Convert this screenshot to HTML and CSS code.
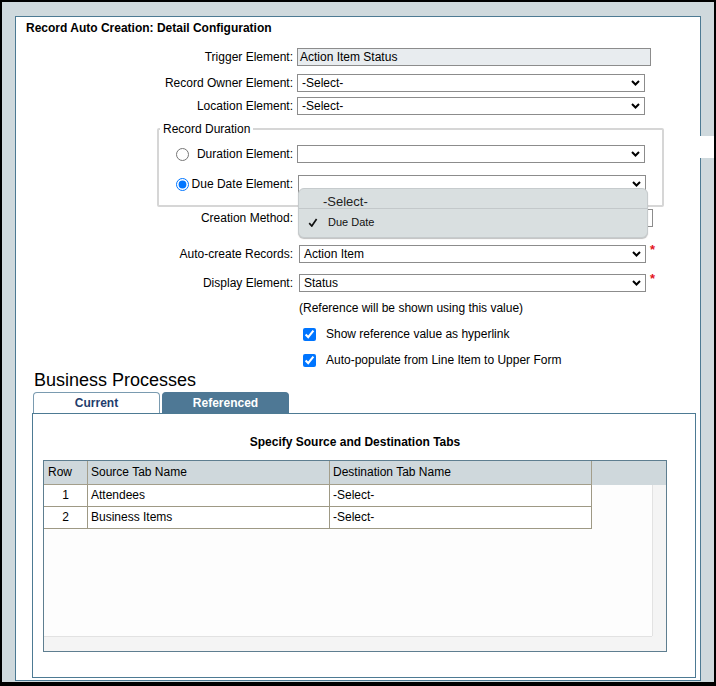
FILE: index.html
```html
<!DOCTYPE html>
<html>
<head>
<meta charset="utf-8">
<link rel="stylesheet" href="styles.css">
</head>
<body>
<div class="frame">
  <div class="panel">
    <div class="title">Record Auto Creation: Detail Configuration</div>

    <div class="row r-trigger">
      <span class="lbl">Trigger Element:</span>
      <div class="field readonly">Action Item Status</div>
    </div>
    <div class="row r-owner">
      <span class="lbl">Record Owner Element:</span>
      <div class="field select"><span>-Select-</span><svg class="chev" width="9" height="6" viewBox="0 0 9 6"><path d="M1 1l3.5 3.5L8 1" stroke="#000" stroke-width="2" fill="none"/></svg></div>
    </div>
    <div class="row r-location">
      <span class="lbl">Location Element:</span>
      <div class="field select"><span>-Select-</span><svg class="chev" width="9" height="6" viewBox="0 0 9 6"><path d="M1 1l3.5 3.5L8 1" stroke="#000" stroke-width="2" fill="none"/></svg></div>
    </div>

    <fieldset class="duration">
      <legend>Record Duration</legend>
      <div class="frow frow1">
        <input type="radio" name="dur" class="radio">
        <span class="flbl">Duration Element:</span>
        <div class="field select"><span></span><svg class="chev" width="9" height="6" viewBox="0 0 9 6"><path d="M1 1l3.5 3.5L8 1" stroke="#000" stroke-width="2" fill="none"/></svg></div>
      </div>
      <div class="frow frow2">
        <input type="radio" name="dur" class="radio" checked>
        <span class="flbl">Due Date Element:</span>
        <div class="field select shift1"><span></span><svg class="chev" width="9" height="6" viewBox="0 0 9 6"><path d="M1 1l3.5 3.5L8 1" stroke="#000" stroke-width="2" fill="none"/></svg></div>
      </div>
    </fieldset>

    <div class="row r-method">
      <span class="lbl">Creation Method:</span>
      <div class="field select wide"><span></span><svg class="chev" width="9" height="6" viewBox="0 0 9 6"><path d="M1 1l3.5 3.5L8 1" stroke="#000" stroke-width="2" fill="none"/></svg></div>
    </div>
    <div class="row r-auto">
      <span class="lbl">Auto-create Records:</span>
      <div class="field select shift2"><span>Action Item</span><svg class="chev" width="9" height="6" viewBox="0 0 9 6"><path d="M1 1l3.5 3.5L8 1" stroke="#000" stroke-width="2" fill="none"/></svg></div>
      <span class="req">*</span>
    </div>
    <div class="row r-display">
      <span class="lbl">Display Element:</span>
      <div class="field select shift2"><span>Status</span><svg class="chev" width="9" height="6" viewBox="0 0 9 6"><path d="M1 1l3.5 3.5L8 1" stroke="#000" stroke-width="2" fill="none"/></svg></div>
      <span class="req">*</span>
    </div>
    <div class="note">(Reference will be shown using this value)</div>
    <label class="crow crow1"><input type="checkbox" class="cb" checked><span>Show reference value as hyperlink</span></label>
    <label class="crow crow2"><input type="checkbox" class="cb" checked><span>Auto-populate from Line Item to Upper Form</span></label>

    <h2 class="bp-title">Business Processes</h2>
    <div class="tabs">
      <div class="tab current">Current</div>
      <div class="tab ref">Referenced</div>
    </div>
    <div class="tab-body">
      <div class="specify">Specify Source and Destination Tabs</div>
      <div class="gridbox">
        <div class="ghead">
          <div class="cell c-row">Row</div>
          <div class="cell c-src">Source Tab Name</div>
          <div class="cell c-dst">Destination Tab Name</div>
        </div>
        <div class="gbody">
          <div class="grow">
            <div class="cell c-row num">1</div>
            <div class="cell c-src">Attendees</div>
            <div class="cell c-dst">-Select-</div>
          </div>
          <div class="grow">
            <div class="cell c-row num">2</div>
            <div class="cell c-src">Business Items</div>
            <div class="cell c-dst">-Select-</div>
          </div>
        </div>
        <div class="vscroll"></div>
        <div class="hscroll"></div>
        <div class="corner"></div>
      </div>
    </div>

    <div class="popup">
      <div class="pitem pitem1">-Select-</div>
      <div class="pitem pitem2"><svg class="tick" width="10" height="9" viewBox="0 0 10 9"><path d="M1.2 5.2l2.6 2.8L8.6 1" stroke="#111" stroke-width="1.7" fill="none"/></svg><span>Due Date</span></div>
    </div>
  </div>
  <div class="notch"></div>
</div>
</body>
</html>
```

FILE: styles.css
```css
* { box-sizing: border-box; }

body {
  margin: 0;
  font-family: "Liberation Sans", Arial, sans-serif;
  font-size: 12px;
  color: #000;
}

.frame {
  position: relative;
  width: 716px;
  height: 686px;
  background: #cfd9dd;
  border: 2px solid #000;
  border-bottom-width: 4px;
  padding: 14px 0 0 13px;
}

.panel {
  position: relative;
  width: 686px;
  height: 665px;
  background: #fff;
  border: 1px solid #4d7a93;
}

.notch {
  position: absolute;
  left: 698px;
  top: 134px;
  width: 14px;
  height: 22px;
  background: #fff;
}

.title {
  font-weight: bold;
  line-height: 14px;
  padding: 4px 0 0 10px;
}

.row {
  display: flex;
  align-items: center;
  height: 18px;
}

.lbl {
  width: 281px;
  padding-right: 4px;
  text-align: right;
  white-space: nowrap;
}

.field {
  height: 18px;
  border: 1px solid #8c8c8c;
  line-height: 16px;
  white-space: nowrap;
}

.readonly {
  width: 354px;
  padding-left: 2px;
  background: #e8ecef;
}

.select {
  width: 348px;
  display: flex;
  align-items: center;
  justify-content: space-between;
  padding: 0 4px 0 4px;
  background: #fff;
}

.select.shift1 { margin-left: 1px; }
.select.shift2 { margin-left: 2px; width: 347px; }
.select.wide { margin-left: 1px; width: 355px; }

.chev { display: block; flex: none; }

.r-trigger { margin-top: 13px; }
.r-owner { margin-top: 8px; }
.r-location { margin-top: 5px; }

.duration {
  margin: 7px 0 0 141px;
  width: 507px;
  padding: 0 0 12px 0;
  border: 2px solid #d6d6d6;
  border-radius: 2px;
}

.duration legend {
  margin-left: 1px;
  padding: 0 3px;
  line-height: 14px;
  font-size: 12px;
}

.frow {
  display: flex;
  align-items: center;
  height: 18px;
}

.frow1 { margin-top: 9px; }
.frow2 { margin-top: 12px; }

.radio {
  width: 13px;
  height: 13px;
  margin: 0 0 0 17px;
  flex: none;
}

.flbl {
  width: 108px;
  padding-right: 4px;
  text-align: right;
  white-space: nowrap;
}

.r-method { margin-top: 2px; }
.r-auto { margin-top: 18px; }
.r-display { margin-top: 11px; }

.req {
  align-self: flex-start;
  margin: -1px 0 0 4px;
  color: #e3141b;
  font-weight: bold;
  font-size: 13px;
  line-height: 12px;
}

.note {
  margin: 9px 0 0 283px;
  line-height: 14px;
}

.crow {
  display: flex;
  align-items: center;
  height: 14px;
  margin-left: 281px;
}

.crow1 { margin-top: 12px; }
.crow2 { margin-top: 12px; }

.cb {
  width: 13px;
  height: 13px;
  margin: 0 10px 0 6px;
  flex: none;
}

.bp-title {
  margin: 3px 0 0 18px;
  font-size: 18px;
  line-height: 21px;
  font-weight: normal;
}

.tabs {
  display: flex;
  margin: 1px 0 0 17px;
  gap: 2px;
}

.tab {
  width: 127px;
  height: 21px;
  border: 1px solid #7a9bb0;
  border-bottom: none;
  border-radius: 4px 4px 0 0;
  text-align: center;
  font-weight: bold;
  line-height: 20px;
}

.tab.current {
  background: #fff;
  color: #1f3d6c;
}

.tab.ref {
  background: #4e7895;
  border-color: #4e7895;
  color: #fff;
}

.tab-body {
  margin-left: 16px;
  width: 664px;
  height: 265px;
  border: 1px solid #4d7a93;
  padding: 21px 0 0 10px;
}

.specify {
  width: 624px;
  text-align: center;
  font-weight: bold;
  line-height: 14px;
}

.gridbox {
  margin-top: 11px;
  width: 624px;
  height: 192px;
  border: 1px solid #5e7e90;
  display: grid;
  grid-template-columns: 1fr 14px;
  grid-template-rows: 24px 1fr 15px;
  background: #fdfdfd;
}

.ghead {
  grid-column: 1 / 3;
  display: flex;
  background: #cfd8dc;
}

.cell {
  border-right: 1px solid #a39e8b;
  border-bottom: 1px solid #a39e8b;
  padding-left: 3px;
  white-space: nowrap;
}

.ghead .cell {
  height: 24px;
  line-height: 23px;
}

.c-row { width: 44px; padding-left: 4px; }
.c-src { width: 242px; }
.c-dst { width: 262px; }

.gbody {
  grid-column: 1;
  grid-row: 2;
}

.grow {
  display: flex;
  height: 22px;
}

.grow .cell {
  height: 22px;
  line-height: 21px;
  background: #fff;
  border-color: #9e9985;
}

.num {
  text-align: center;
  padding-left: 0;
}

.vscroll {
  grid-column: 2;
  grid-row: 2;
  background: #f4f4f4;
  border-left: 1px solid #e2e2e2;
}

.hscroll {
  grid-column: 1;
  grid-row: 3;
  background: #f4f4f4;
  border-top: 1px solid #e2e2e2;
}

.corner {
  grid-column: 2;
  grid-row: 3;
  background: #f4f4f4;
}

.popup {
  position: absolute;
  left: 282px;
  top: 171px;
  width: 350px;
  height: 50px;
  background: #d9dfe0;
  border: 1px solid #c6cbcd;
  border-radius: 6px;
  box-shadow: 0 1px 1px rgba(0, 0, 0, 0.25);
}

.pitem1 {
  height: 20px;
  padding: 6px 0 0 24px;
  font-size: 13px;
  line-height: 14px;
  color: #222;
  border-bottom: 1px solid #c3c8ca;
}

.pitem2 {
  display: flex;
  align-items: center;
  padding: 7px 0 0 9px;
  font-size: 11px;
  line-height: 13px;
  color: #111;
}

.tick {
  display: block;
  margin-right: 10px;
}
```
